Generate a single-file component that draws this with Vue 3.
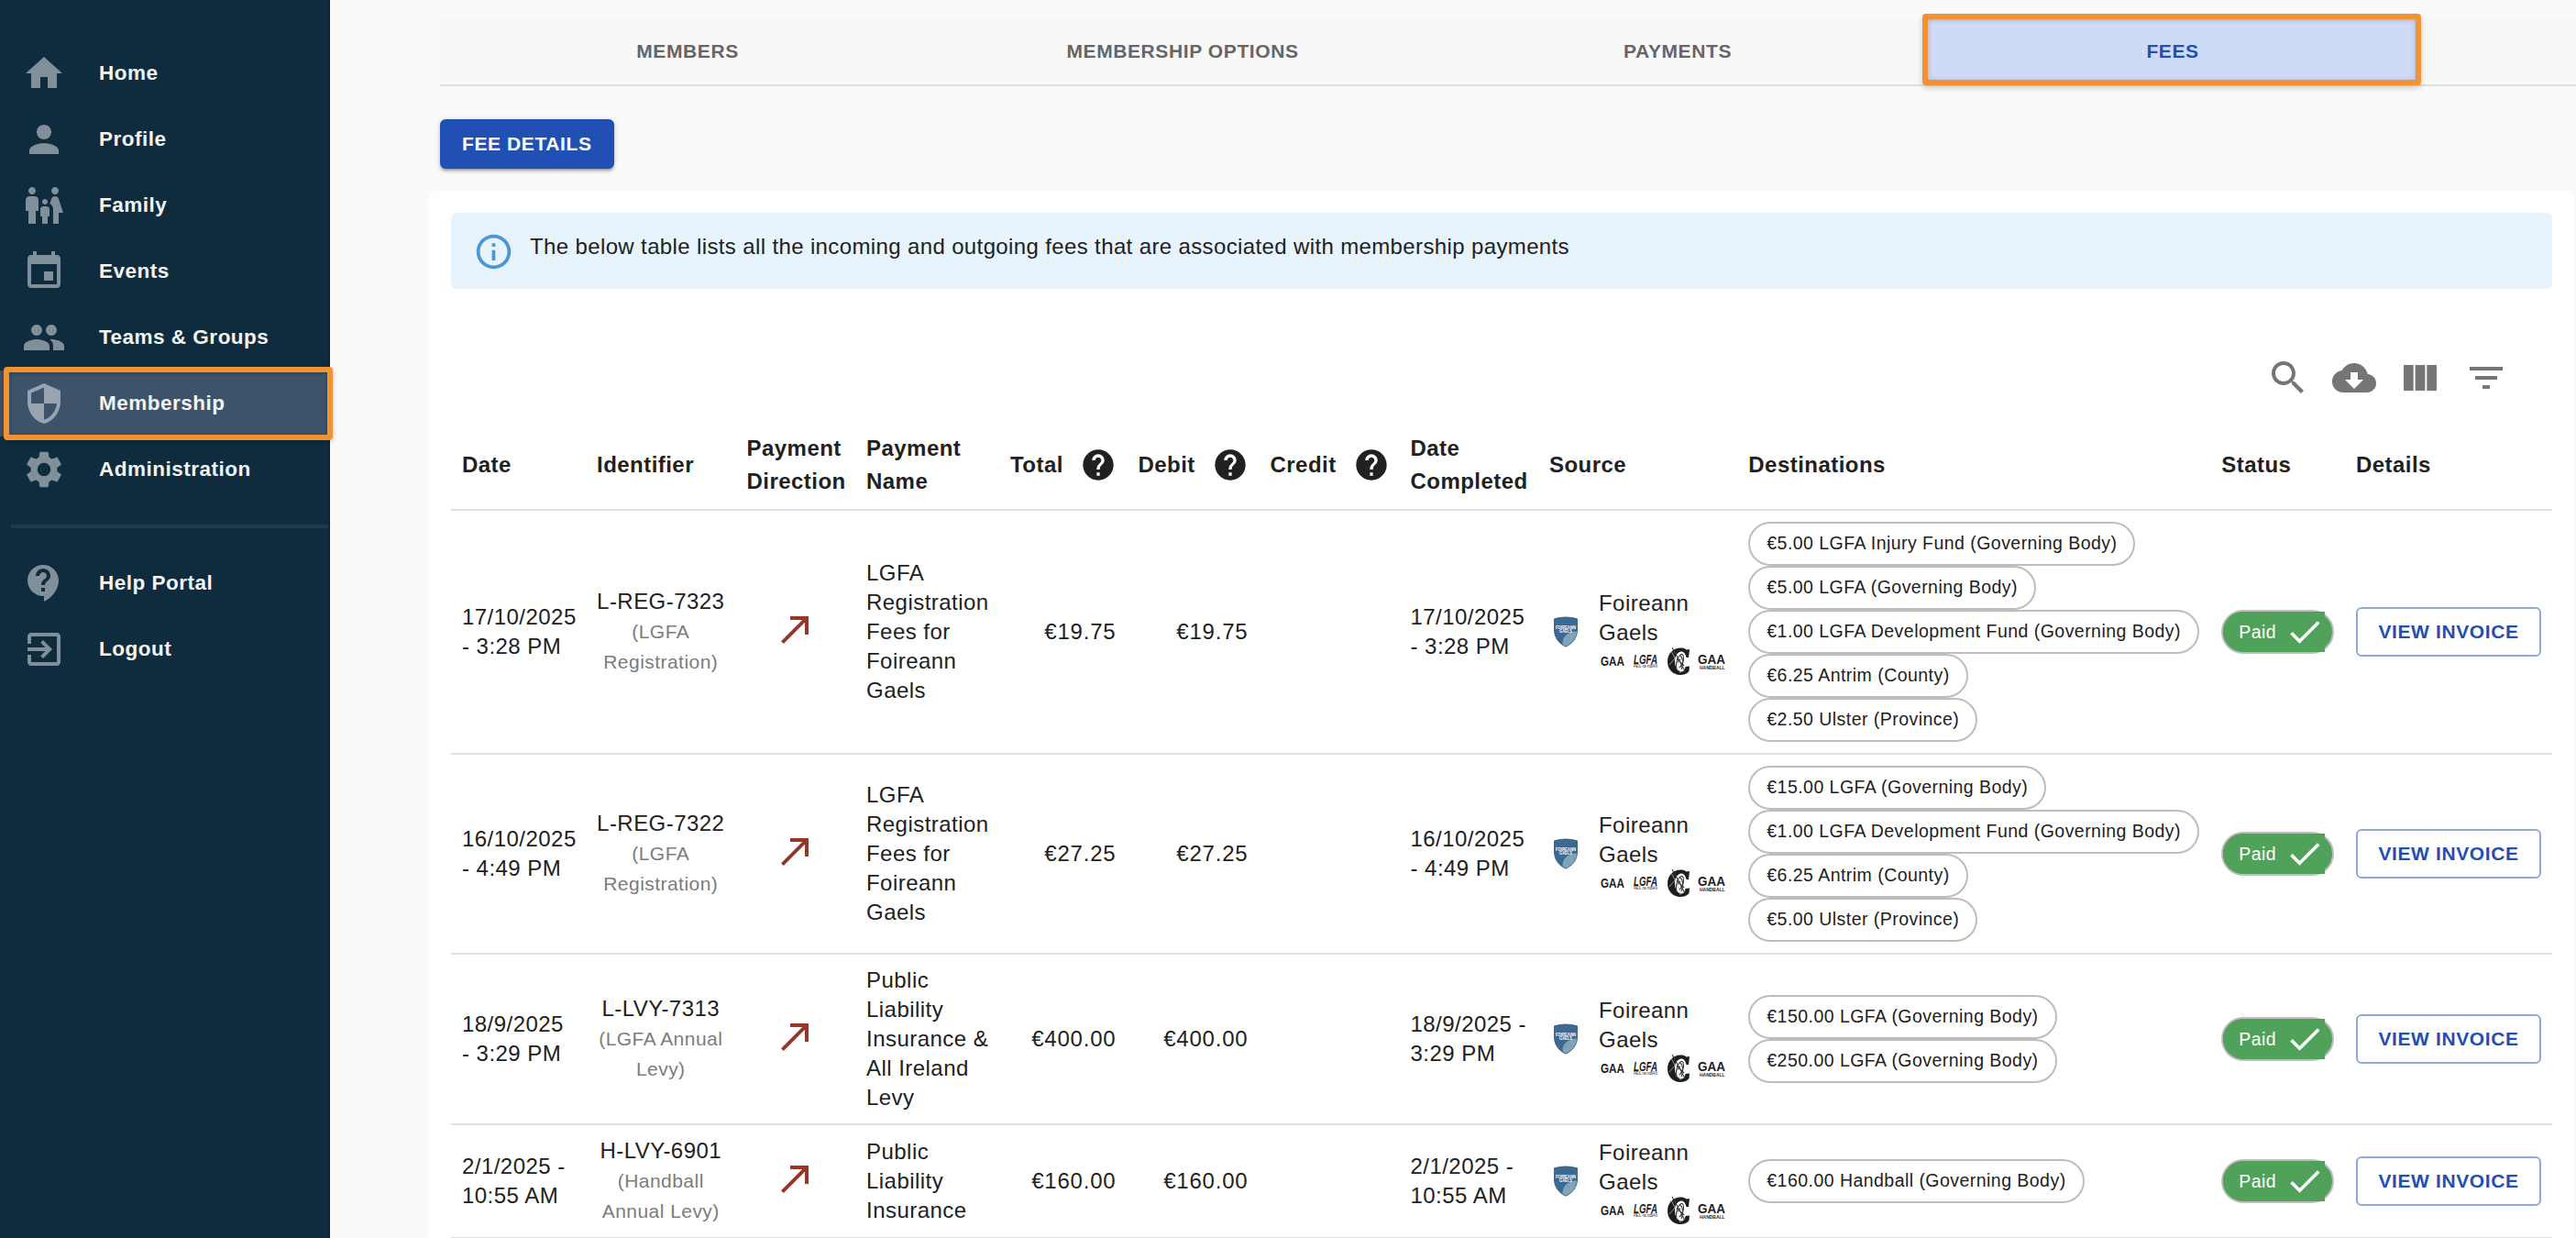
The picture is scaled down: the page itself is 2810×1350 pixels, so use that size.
<script setup>
import { ref } from 'vue'

const ICONS = {
  home: 'M10 20v-6h4v6h5v-8h3L12 3 2 12h3v8z',
  person: 'M12 12c2.21 0 4-1.79 4-4s-1.79-4-4-4-4 1.79-4 4 1.79 4 4 4zm0 2c-2.67 0-8 1.34-8 4v2h16v-2c0-2.66-5.33-4-8-4z',
  family: 'M16 4c0-1.11.89-2 2-2s2 .89 2 2-.89 2-2 2-2-.89-2-2zm4 18v-6h2.5l-2.54-7.63C19.68 7.55 18.92 7 18.06 7h-.12c-.86 0-1.63.55-1.9 1.37l-.86 2.58c1.08.6 1.82 1.73 1.82 3.05v8h3zm-7.5-10.5c.83 0 1.5-.67 1.5-1.5s-.67-1.5-1.5-1.5S11 9.17 11 10s.67 1.5 1.5 1.5zM5.5 6c1.11 0 2-.89 2-2s-.89-2-2-2-2 .89-2 2 .89 2 2 2zm2 16v-7H9V9c0-1.1-.9-2-2-2H4c-1.1 0-2 .9-2 2v6h1.5v7h4zm6.5 0v-4h1v-4c0-.82-.68-1.5-1.5-1.5h-2c-.82 0-1.5.68-1.5 1.5v4h1v4h3z',
  event: 'M17 12h-5v5h5v-5zM16 1v2H8V1H6v2H5c-1.11 0-1.99.9-1.99 2L3 19c0 1.1.89 2 2 2h14c1.1 0 2-.9 2-2V5c0-1.1-.9-2-2-2h-1V1h-2zm3 18H5V8h14v11z',
  people: 'M16 11c1.66 0 2.99-1.34 2.99-3S17.66 5 16 5c-1.66 0-3 1.34-3 3s1.34 3 3 3zm-8 0c1.66 0 2.99-1.34 2.99-3S9.66 5 8 5C6.34 5 5 6.34 5 8s1.34 3 3 3zm0 2c-2.33 0-7 1.17-7 3.5V19h14v-2.5c0-2.33-4.67-3.5-7-3.5zm8 0c-.29 0-.62.02-.97.05 1.16.84 1.97 1.97 1.97 3.45V19h6v-2.5c0-2.33-4.67-3.5-7-3.5z',
  shield: 'M12 1L3 5v6c0 5.55 3.84 10.74 9 12 5.16-1.26 9-6.45 9-12V5l-9-4zm0 10.99h7c-.53 4.12-3.28 7.79-7 8.94V12H5V6.3l7-3.11v8.8z',
  settings: 'M19.14 12.94c.04-.3.06-.61.06-.94 0-.32-.02-.64-.07-.94l2.03-1.58c.18-.14.23-.41.12-.61l-1.92-3.32c-.12-.22-.37-.29-.59-.22l-2.39.96c-.5-.38-1.03-.7-1.62-.94l-.36-2.54c-.04-.24-.24-.41-.48-.41h-3.84c-.24 0-.43.17-.47.41l-.36 2.54c-.59.24-1.13.57-1.62.94l-2.39-.96c-.22-.08-.47 0-.59.22L2.74 8.87c-.12.21-.08.47.12.61l2.03 1.58c-.05.3-.09.63-.09.94s.02.64.07.94l-2.03 1.58c-.18.14-.23.41-.12.61l1.92 3.32c.12.22.37.29.59.22l2.39-.96c.5.38 1.03.7 1.62.94l.36 2.54c.05.24.24.41.48.41h3.84c.24 0 .44-.17.47-.41l.36-2.54c.59-.24 1.13-.56 1.62-.94l2.39.96c.22.08.47 0 .59-.22l1.92-3.32c.12-.22.07-.47-.12-.61l-2.01-1.58zM12 15.6c-1.98 0-3.6-1.62-3.6-3.6s1.62-3.6 3.6-3.6 3.6 1.62 3.6 3.6-1.62 3.6-3.6 3.6z',
  support: 'M11.5 2C6.81 2 3 5.81 3 10.5S6.81 19 11.5 19h.5v3c4.86-2.34 8-7 8-11.5C20 5.81 16.19 2 11.5 2zm1 14.5h-2v-2h2v2zm0-3.5h-2c0-3.25 3-3 3-5 0-1.1-.9-2-2-2s-2 .9-2 2h-2c0-2.21 1.79-4 4-4s4 1.79 4 4c0 2.5-3 2.75-3 5z',
  logout: 'M10.09 15.59L11.5 17l5-5-5-5-1.41 1.41L12.67 11H3v2h9.67l-2.58 2.59zM19 3H5c-1.11 0-2 .9-2 2v4h2V5h14v14H5v-4H3v4c0 1.1.89 2 2 2h14c1.1 0 2-.9 2-2V5c0-1.1-.9-2-2-2z',
  info: 'M11 9h2V7h-2v2zm1 11c-4.41 0-8-3.59-8-8s3.59-8 8-8 8 3.59 8 8-3.59 8-8 8zm0-18a10 10 0 0 0-10 10 10 10 0 0 0 10 10 10 10 0 0 0 10-10A10 10 0 0 0 12 2zm-1 15h2v-6h-2v6z',
  search: 'M15.5 14h-.79l-.28-.27C15.41 12.59 16 11.11 16 9.5 16 5.91 13.09 3 9.5 3S3 5.91 3 9.5 5.91 16 9.5 16c1.61 0 3.09-.59 4.23-1.57l.27.28v.79l5 4.99L20.49 19l-4.99-5zm-6 0C7.01 14 5 11.99 5 9.5S7.01 5 9.5 5 14 7.01 14 9.5 11.99 14 9.5 14z',
  download: 'M19.35 10.04C18.67 6.59 15.64 4 12 4 9.11 4 6.6 5.64 5.35 8.04 2.34 8.36 0 10.91 0 14c0 3.31 2.69 6 6 6h13c2.76 0 5-2.24 5-5 0-2.64-2.05-4.78-4.65-4.96zM17 13l-5 5-5-5h3V9h4v4h3z',
  columns: 'M14.67 5v14H9.33V5h5.34zm1 14H21V5h-5.33v14zm-7.34 0V5H3v14h5.33z',
  filter: 'M10 18h4v-2h-4v2zM3 6v2h18V6H3zm3 7h12v-2H6v2z',
  help: 'M12 2C6.48 2 2 6.48 2 12s4.48 10 10 10 10-4.48 10-10S17.52 2 12 2zm1 17h-2v-2h2v2zm2.07-7.75l-.9.92C13.45 12.9 13 13.5 13 15h-2v-.5c0-1.1.45-2.1 1.17-2.83l1.24-1.26c.37-.36.59-.86.59-1.41 0-1.1-.9-2-2-2s-2 .9-2 2H8c0-2.21 1.79-4 4-4s4 1.79 4 4c0 .88-.36 1.68-.93 2.25z',
  outgoing: 'M9 5v2h6.59L4 18.59 5.41 20 17 8.41V15h2V5z',
  done: 'M9 16.2L4.8 12l-1.4 1.4L9 19 21 7l-1.4-1.4L9 16.2z'
}

const mainMenu = [
  { label: 'Home', icon: 'home' },
  { label: 'Profile', icon: 'person' },
  { label: 'Family', icon: 'family' },
  { label: 'Events', icon: 'event' },
  { label: 'Teams & Groups', icon: 'people' },
  { label: 'Membership', icon: 'shield' },
  { label: 'Administration', icon: 'settings' }
]
const footMenu = [
  { label: 'Help Portal', icon: 'support' },
  { label: 'Logout', icon: 'logout' }
]
const activeMenu = ref('Membership')

// last tab runs off the right edge
const tabs = ['MEMBERS', 'MEMBERSHIP OPTIONS', 'PAYMENTS', 'FEES', '']
const activeTab = ref('FEES')

const tools = ['search', 'download', 'columns', 'filter']

const columns = [
  { label: 'Date', width: 147 },
  { label: 'Identifier', width: 163.5 },
  { label: 'Payment\nDirection', width: 130.5 },
  { label: 'Payment\nName', width: 157 },
  { label: 'Total', width: 139.5, help: true },
  { label: 'Debit', width: 144, help: true },
  { label: 'Credit', width: 153, help: true },
  { label: 'Date\nCompleted', width: 151.5 },
  { label: 'Source', width: 217.3 },
  { label: 'Destinations', width: 516 },
  { label: 'Status', width: 146.7 },
  { label: 'Details', width: 226 }
]

const fees = ref([
  {
    id: 'L-REG-7323',
    type: '(LGFA\nRegistration)',
    date: '17/10/2025\n- 3:28 PM',
    completed: '17/10/2025\n- 3:28 PM',
    name: 'LGFA\nRegistration\nFees for\nFoireann\nGaels',
    amount: '€19.75',
    destinations: [
      '€5.00 LGFA Injury Fund (Governing Body)',
      '€5.00 LGFA (Governing Body)',
      '€1.00 LGFA Development Fund (Governing Body)',
      '€6.25 Antrim (County)',
      '€2.50 Ulster (Province)'
    ]
  },
  {
    id: 'L-REG-7322',
    type: '(LGFA\nRegistration)',
    date: '16/10/2025\n- 4:49 PM',
    completed: '16/10/2025\n- 4:49 PM',
    name: 'LGFA\nRegistration\nFees for\nFoireann\nGaels',
    amount: '€27.25',
    destinations: [
      '€15.00 LGFA (Governing Body)',
      '€1.00 LGFA Development Fund (Governing Body)',
      '€6.25 Antrim (County)',
      '€5.00 Ulster (Province)'
    ]
  },
  {
    id: 'L-LVY-7313',
    type: '(LGFA Annual\nLevy)',
    date: '18/9/2025\n- 3:29 PM',
    completed: '18/9/2025 -\n3:29 PM',
    name: 'Public\nLiability\nInsurance &\nAll Ireland\nLevy',
    amount: '€400.00',
    destinations: [
      '€150.00 LGFA (Governing Body)',
      '€250.00 LGFA (Governing Body)'
    ]
  },
  {
    id: 'H-LVY-6901',
    type: '(Handball\nAnnual Levy)',
    date: '2/1/2025 -\n10:55 AM',
    completed: '2/1/2025 -\n10:55 AM',
    name: 'Public\nLiability\nInsurance',
    amount: '€160.00',
    destinations: ['€160.00 Handball (Governing Body)']
  }
])
</script>

<template>
  <div class="page">
    <aside class="sidebar">
      <nav>
        <a
          v-for="item in mainMenu"
          :key="item.label"
          class="menu-item"
          :class="{ active: item.label === activeMenu }"
          @click="activeMenu = item.label"
        >
          <svg class="icon" viewBox="0 0 24 24"><path :d="ICONS[item.icon]" /></svg>
          <span>{{ item.label }}</span>
        </a>
      </nav>
      <div class="divider" />
      <nav>
        <a v-for="item in footMenu" :key="item.label" class="menu-item">
          <svg class="icon" viewBox="0 0 24 24"><path :d="ICONS[item.icon]" /></svg>
          <span>{{ item.label }}</span>
        </a>
      </nav>
    </aside>

    <main class="main">
      <div class="tabs">
        <button
          v-for="(tab, i) in tabs"
          :key="i"
          class="tab"
          :class="{ active: tab === activeTab }"
          @click="activeTab = tab"
        >{{ tab }}</button>
      </div>

      <button class="fee-btn">FEE DETAILS</button>

      <section class="card">
        <div class="alert">
          <svg class="alert-icon" viewBox="0 0 24 24"><path :d="ICONS.info" /></svg>
          <span>The below table lists all the incoming and outgoing fees that are associated with membership payments</span>
        </div>

        <div class="toolbar">
          <svg v-for="tool in tools" :key="tool" class="tool" viewBox="0 0 24 24">
            <path :d="ICONS[tool]" />
          </svg>
        </div>

        <table class="fees">
          <colgroup>
            <col v-for="col in columns" :key="col.label" :style="{ width: col.width + 'px' }" />
          </colgroup>
          <thead>
            <tr>
              <th v-for="col in columns" :key="col.label">
                <div v-if="col.help" class="th-help">
                  <span>{{ col.label }}</span>
                  <svg class="help" viewBox="0 0 24 24"><path :d="ICONS.help" /></svg>
                </div>
                <template v-else>{{ col.label }}</template>
              </th>
            </tr>
          </thead>
          <tbody>
            <tr v-for="fee in fees" :key="fee.id">
              <td>{{ fee.date }}</td>
              <td class="center">{{ fee.id }}<br /><span class="type">{{ fee.type }}</span></td>
              <td class="center">
                <svg class="direction" viewBox="0 0 24 24"><path :d="ICONS.outgoing" /></svg>
              </td>
              <td>{{ fee.name }}</td>
              <td class="right">{{ fee.amount }}</td>
              <td class="right">{{ fee.amount }}</td>
              <td class="right"></td>
              <td>{{ fee.completed }}</td>
              <td>
                <div class="source">
                  <svg class="crest" viewBox="0 0 36 36">
                    <path d="M5.500 3.800Q18 .2 30.500 3.800V16C30.500 25 25 31 18 34.200 11 31 5.500 25 5.500 16Z" fill="#3b6991" stroke="#34516b" stroke-width=".8" />
                    <path d="M30 17.500C22 17.500 14 22 14.500 31.500Q16 33 18 33.800C25 30.500 29.700 25 30 17.500Z" fill="#7ea3ba" />
                    <text x="18" y="14.500" textLength="22" lengthAdjust="spacingAndGlyphs">FOIREANN</text>
                    <text x="18" y="19.300" textLength="14" lengthAdjust="spacingAndGlyphs">GAELS</text>
                  </svg>
                  <div>
                    <div>Foireann</div>
                    <div>Gaels</div>
                    <div class="codes">
                      <svg viewBox="0 0 30 30">
                        <text class="code" x="2" y="20" font-size="14" textLength="26" lengthAdjust="spacingAndGlyphs">GAA</text>
                      </svg>
                      <svg viewBox="0 0 30 30">
                        <text class="code slant" x="2" y="17.500" font-size="14" textLength="26" lengthAdjust="spacingAndGlyphs">LGFA</text>
                        <text class="code-sub slant" x="2" y="22" font-size="4.500" textLength="26" lengthAdjust="spacingAndGlyphs">PEIL na mBAN</text>
                      </svg>
                      <svg viewBox="0 0 30 30">
                        <path d="M27 2L26 11H23.500C22.500 6 20 4 17.500 4.500 12 6 11 11 11 15.500 11 21 13.500 26 18 26.500 21 26.500 22 24 22.500 21L27 20.500 26.500 26C24 29 20 30 17 30 8.500 30 3 23.500 3 15.500 3 7 9 .500 17 .500 20 .500 22 1 23.500 2.500Z" fill="#1d1d1d" />
                        <path d="M8 0L13 9 22 26M13 25Q11 15 16 9Q20 5 20.500 11T16 22M13 12L21 20M17 9Q22 14 18 24M12 18L17 13" fill="none" stroke="#3a3a3a" stroke-width="1.100" />
                        <path d="M7 4L13 15 17 28M5 19L11 12" fill="none" stroke="#ccc" stroke-width=".7" />
                      </svg>
                      <svg viewBox="0 0 30 30">
                        <text class="code" x="0" y="17.500" font-size="15.500" textLength="30" lengthAdjust="spacingAndGlyphs">GAA</text>
                        <text class="code" x="2" y="24.300" font-size="6" textLength="27.500" lengthAdjust="spacingAndGlyphs">HANDBALL</text>
                      </svg>
                    </div>
                  </div>
                </div>
              </td>
              <td>
                <div class="chips">
                  <span v-for="dest in fee.destinations" :key="dest" class="chip">{{ dest }}</span>
                </div>
              </td>
              <td>
                <div class="status">
                  <div class="status-label">
                    <span>Paid</span>
                    <svg viewBox="0 0 24 24"><path :d="ICONS.done" /></svg>
                  </div>
                </div>
              </td>
              <td><button class="invoice-btn">VIEW INVOICE</button></td>
            </tr>
          </tbody>
        </table>
      </section>
    </main>
  </div>
</template>

<style>
body {
  margin: 0;
  background: #fafafa;
}
</style>

<style scoped>
.page {
  display: flex;
  width: 2810px;
  height: 1350px;
  overflow: hidden;
  background: #fafafa;
  color: #212121;
  font-family: Helvetica, "Liberation Sans", Arial, sans-serif;
  font-size: 24px;
  letter-spacing: 0.46px;
}

button {
  font-family: inherit;
  font-size: 21px;
  font-weight: 700;
  letter-spacing: 0.6px;
  cursor: pointer;
}

svg {
  display: block;
  fill: currentColor;
  flex-shrink: 0;
  overflow: visible;
}

/* sidebar */
.sidebar {
  width: 360px;
  flex-shrink: 0;
  box-sizing: border-box;
  padding-top: 44px;
  background: #0f2c3e;
  border-right: 2px solid #0c2537;
}

.menu-item {
  position: relative;
  display: flex;
  align-items: center;
  height: 72px;
  padding-left: 24px;
  gap: 36px;
  color: #f2f4f5;
  font-size: 22.5px;
  font-weight: 700;
  letter-spacing: 0.5px;
  line-height: 28px;
  cursor: pointer;
}

.menu-item span {
  padding-bottom: 1px;
}

.menu-item .icon {
  width: 48px;
  height: 48px;
  color: #808f99;
}

.menu-item.active {
  background: #3d5369;
}

.menu-item.active .icon {
  color: #97a4af;
}

/* highlight frame */
.menu-item.active::after {
  content: '';
  position: absolute;
  left: 4px;
  top: -4px;
  width: 347px;
  height: 68px;
  border: 6px solid #f39233;
  border-radius: 4px;
  box-shadow: 0 2px 5px rgba(0, 0, 0, 0.2), inset 0 1px 4px rgba(0, 0, 0, 0.25);
}

.divider {
  height: 4px;
  margin: 24px 0 24px 12px;
  background: #21394a;
}

/* content */
.main {
  flex: 1;
  min-width: 0;
  padding: 20px 0 0 108px;
}

.tabs {
  display: flex;
  margin-left: 12px;
  height: 72px;
  background: #f8f8f8;
  border-bottom: 2px solid #e0e0e0;
}

.tab {
  position: relative;
  width: 540px;
  flex-shrink: 0;
  padding: 0;
  border: none;
  background: transparent;
  color: #666;
}

.tab.active {
  background: #cfdaf7;
  color: #2150b4;
}

.tab.active::after {
  content: '';
  position: absolute;
  left: -3px;
  top: -5px;
  width: 532px;
  height: 66px;
  border: 6px solid #f39233;
  border-radius: 4px;
  box-shadow: 0 3px 6px rgba(0, 0, 0, 0.18), inset 0 1px 5px rgba(0, 0, 0, 0.22);
}

.fee-btn {
  display: block;
  height: 54px;
  margin: 36px 0 0 12px;
  padding: 0 24px;
  border: none;
  border-radius: 6px;
  background: #2150b4;
  color: #fff;
  box-shadow: 0 4px 2px -3px rgba(0, 0, 0, 0.2), 0 3px 3px rgba(0, 0, 0, 0.18), 0 1px 7px rgba(0, 0, 0, 0.14);
}

.card {
  width: 2340px;
  box-sizing: border-box;
  margin-top: 24px;
  padding: 24px 24px 0;
  height: 1160px;
  border-radius: 12px;
  background: #fff;
}

.alert {
  display: flex;
  box-sizing: border-box;
  height: 83px;
  padding: 20px 24px;
  gap: 17px;
  border-radius: 6px;
  background: #e7f4fd;
  letter-spacing: 0.37px;
  line-height: 34px;
}

.alert-icon {
  width: 45px;
  height: 45px;
  color: #4a96d6;
}

.toolbar {
  display: flex;
  justify-content: flex-end;
  gap: 24px;
  height: 71px;
  padding: 73px 48px 0 0;
}

.tool {
  width: 48px;
  height: 48px;
  color: #757575;
}

/* table */
.fees {
  width: 2292px;
  table-layout: fixed;
  border-collapse: separate;
  border-spacing: 0;
}

.fees th,
.fees td {
  padding: 12px;
  border-bottom: 2px solid #e0e0e0;
  text-align: left;
  vertical-align: middle;
  white-space: pre;
}

.fees th {
  line-height: 36px;
  font-weight: 700;
}

.fees td {
  line-height: 32px;
}

.fees .center {
  text-align: center;
}

.fees .right {
  text-align: right;
  letter-spacing: 0.8px;
}

.th-help {
  display: flex;
  align-items: center;
  gap: 18px;
  height: 36px;
}

.help {
  width: 40px;
  height: 40px;
}

.type {
  color: #7c7c7c;
  font-size: 21px;
}

.direction {
  width: 48px;
  height: 48px;
  margin: 0 auto 6px;
  color: #983729;
}

.source {
  display: flex;
  align-items: center;
  gap: 18px;
}

.crest {
  width: 36px;
  height: 36px;
}

.crest text {
  fill: #fff;
  font-size: 5.2px;
  font-weight: 700;
  letter-spacing: 0;
  text-anchor: middle;
}

.codes {
  display: flex;
  gap: 6px;
  height: 31px;
}

.codes svg {
  width: 30px;
  height: 30px;
}

.code,
.code-sub {
  fill: #1d1d1d;
  font-weight: 700;
  letter-spacing: 0;
}

.code-sub {
  font-weight: 400;
}

.slant {
  font-style: italic;
}

.chips {
  display: flex;
  flex-direction: column;
  align-items: flex-start;
}

.chip {
  box-sizing: border-box;
  height: 48px;
  padding: 0 18px;
  border: 2px solid #bdbdbd;
  border-radius: 24px;
  font-size: 19.5px;
  letter-spacing: 0.46px;
  line-height: 43px;
}

.status {
  box-sizing: border-box;
  width: 122.7px;
  height: 48px;
  border: 2px solid #bdbdbd;
  border-radius: 24px;
  background: #50a25b;
}

/* square right edge runs over the round border */
.status-label {
  display: flex;
  align-items: center;
  justify-content: space-between;
  box-sizing: border-box;
  width: 111px;
  height: 44px;
  padding-left: 17px;
  border-radius: 22px 0 0 22px;
  background: #50a25b;
  color: #fff;
  font-size: 19.5px;
  letter-spacing: 0.46px;
}

.status-label svg {
  width: 44px;
  height: 44px;
}

.invoice-btn {
  box-sizing: border-box;
  display: block;
  width: 202px;
  height: 54px;
  padding: 0;
  border: 2px solid #90a8da;
  border-radius: 6px;
  background: #fff;
  color: #2150b4;
}
</style>
